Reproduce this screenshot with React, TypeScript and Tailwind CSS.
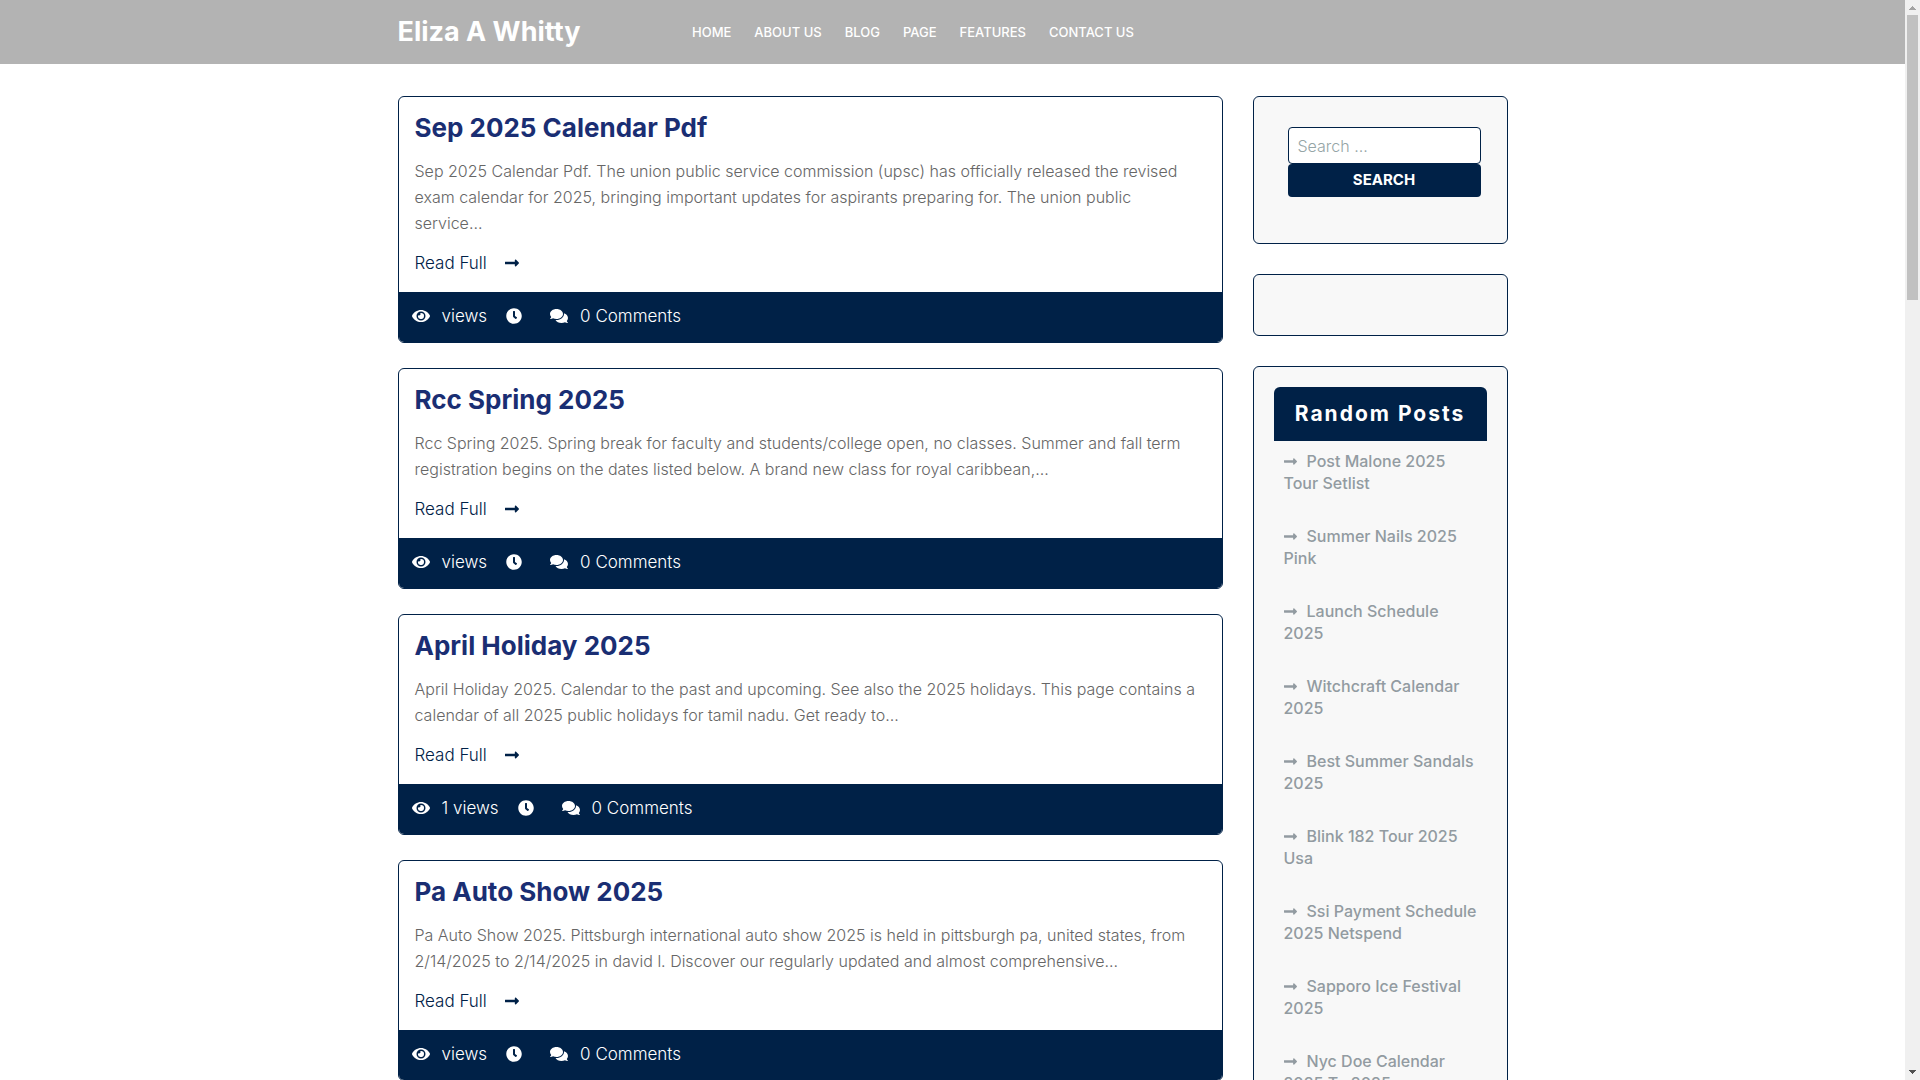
import React, { FC } from "react";
import { FaClock, FaComments, FaEye, FaLongArrowAltRight } from "react-icons/fa";

interface Post {
  title: string;
  text: string;
  views: string;
}

const navLinks = ["Home", "About Us", "Blog", "Page", "Features", "Contact Us"];

const posts: Post[] = [
  {
    title: "Sep 2025 Calendar Pdf",
    text: "Sep 2025 Calendar Pdf. The union public service commission (upsc) has officially released the revised\nexam calendar for 2025, bringing important updates for aspirants preparing for. The union public\nservice...",
    views: "views",
  },
  {
    title: "Rcc Spring 2025",
    text: "Rcc Spring 2025. Spring break for faculty and students/college open, no classes. Summer and fall term\nregistration begins on the dates listed below. A brand new class for royal caribbean,...",
    views: "views",
  },
  {
    title: "April Holiday 2025",
    text: "April Holiday 2025. Calendar to the past and upcoming. See also the 2025 holidays. This page contains a\ncalendar of all 2025 public holidays for tamil nadu. Get ready to...",
    views: "1 views",
  },
  {
    title: "Pa Auto Show 2025",
    text: "Pa Auto Show 2025. Pittsburgh international auto show 2025 is held in pittsburgh pa, united states, from\n2/14/2025 to 2/14/2025 in david l. Discover our regularly updated and almost comprehensive...",
    views: "views",
  },
];

const randomPosts = [
  "Post Malone 2025\nTour Setlist",
  "Summer Nails 2025\nPink",
  "Launch Schedule\n2025",
  "Witchcraft Calendar\n2025",
  "Best Summer Sandals\n2025",
  "Blink 182 Tour 2025\nUsa",
  "Ssi Payment Schedule\n2025 Netspend",
  "Sapporo Ice Festival\n2025",
  "Nyc Doe Calendar\n2025 To 2025",
];

const Header: FC = () => (
  <header className="bg-[#b3b3b3] text-white">
    <div className="mx-auto flex h-16 max-w-[1140px] items-center px-[15px]">
      <p className="w-1/4 text-[27px] leading-8 font-bold">
        <a href="#">Eliza A Whitty</a>
      </p>
      <nav className="flex gap-[23px] pl-[17px] text-[13px] leading-5 font-medium uppercase">
        {navLinks.map((link) => (
          <a key={link} href="#">
            {link}
          </a>
        ))}
      </nav>
    </div>
  </header>
);

const PostCard: FC<Post> = ({ title, text, views }) => (
  <article className="overflow-hidden rounded-md border border-[#002147]">
    <div className="px-4 pt-4 pb-[17px]">
      <h2 className="text-[26px] leading-[30px] font-bold text-[#1a2e73]">
        <a href="#">{title}</a>
      </h2>
      <p className="mt-[15px] text-base leading-[26px] font-light whitespace-pre-line text-[#666666]">
        {text}
      </p>
      <a
        href="#"
        className="mt-[15px] flex items-center gap-[18px] text-[17px] leading-6 font-light text-[#002147]"
      >
        Read Full
        <FaLongArrowAltRight className="h-4 w-[14px]" />
      </a>
    </div>
    <div className="flex items-center bg-[#002147] px-[13px] pt-3 pb-[14px] text-[17px] leading-6 font-light text-white">
      <FaEye className="mr-3 h-4 w-[18px]" />
      <span className="mr-[19px]">{views}</span>
      <FaClock className="mr-7 h-4 w-4" />
      <FaComments className="mr-3 h-4 w-[18px]" />
      <span>0 Comments</span>
    </div>
  </article>
);

const Sidebar: FC = () => (
  <aside className="flex w-[255px] shrink-0 flex-col gap-[30px]">
    <section className="rounded-md border border-[#002147] bg-[#f8f8f8] pt-[30px] pr-[26px] pb-[46px] pl-[34px]">
      <form role="search" onSubmit={(e) => e.preventDefault()}>
        <input
          type="search"
          aria-label="Search"
          placeholder="Search ..."
          className="block h-[37px] w-full rounded border border-[#002147] bg-white px-[9px] text-base font-light placeholder:text-[#95a5a6]"
        />
        <button
          type="submit"
          className="block h-[33px] w-full rounded bg-[#002147] text-[15px] font-bold text-white uppercase"
        >
          Search
        </button>
      </form>
    </section>
    <section className="h-[62px] rounded-md border border-[#002147] bg-[#f8f8f8]"></section>
    <section className="rounded-md border border-[#002147] bg-[#f8f8f8] p-5">
      <h3 className="rounded-t-md bg-[#002147] py-3 text-center text-[21px] leading-[30px] font-bold tracking-[2px] text-white">
        Random Posts
      </h3>
      <ul className="flex flex-col gap-[31px] px-[10px] pt-[9px]">
        {randomPosts.map((post) => (
          <li key={post} className="text-base leading-[22px] font-medium whitespace-pre-line text-[#929ba1]">
            <a href="#">
              <FaLongArrowAltRight className="mr-[10px] inline h-[15px] w-[13px] align-[-2px]" />
              {post}
            </a>
          </li>
        ))}
      </ul>
    </section>
  </aside>
);

const Scrollbar: FC = () => (
  <div className="flex w-[15px] shrink-0 flex-col items-center bg-[#f0f0f0]">
    <svg className="h-[15px] w-[15px]" viewBox="0 0 15 15" shapeRendering="crispEdges">
      <path d="M7 6h1v1h1v1h1v1h1v1H4V9h1V8h1V7h1z" fill="#a3a3a3" />
    </svg>
    <div className="h-[285px] w-[11px] bg-[#c1c1c1]"></div>
    <svg className="mt-auto h-[15px] w-[15px]" viewBox="0 0 15 15" shapeRendering="crispEdges">
      <path d="M4 5h7v1h-1v1H9v1H8v1H7V8H6V7H5V6H4z" fill="#505050" />
    </svg>
  </div>
);

const App: FC = () => {
  return (
    <div className="flex h-screen overflow-hidden bg-white font-['Inter',sans-serif]">
      <div className="min-w-0 flex-1">
        <Header />
        <div className="mx-auto flex max-w-[1140px] items-start gap-[30px] px-[15px] pt-8">
          <main className="flex min-w-0 flex-1 flex-col gap-[25px]">
            {posts.map((post) => (
              <PostCard key={post.title} {...post} />
            ))}
          </main>
          <Sidebar />
        </div>
      </div>
      <Scrollbar />
    </div>
  );
};

export default App;
